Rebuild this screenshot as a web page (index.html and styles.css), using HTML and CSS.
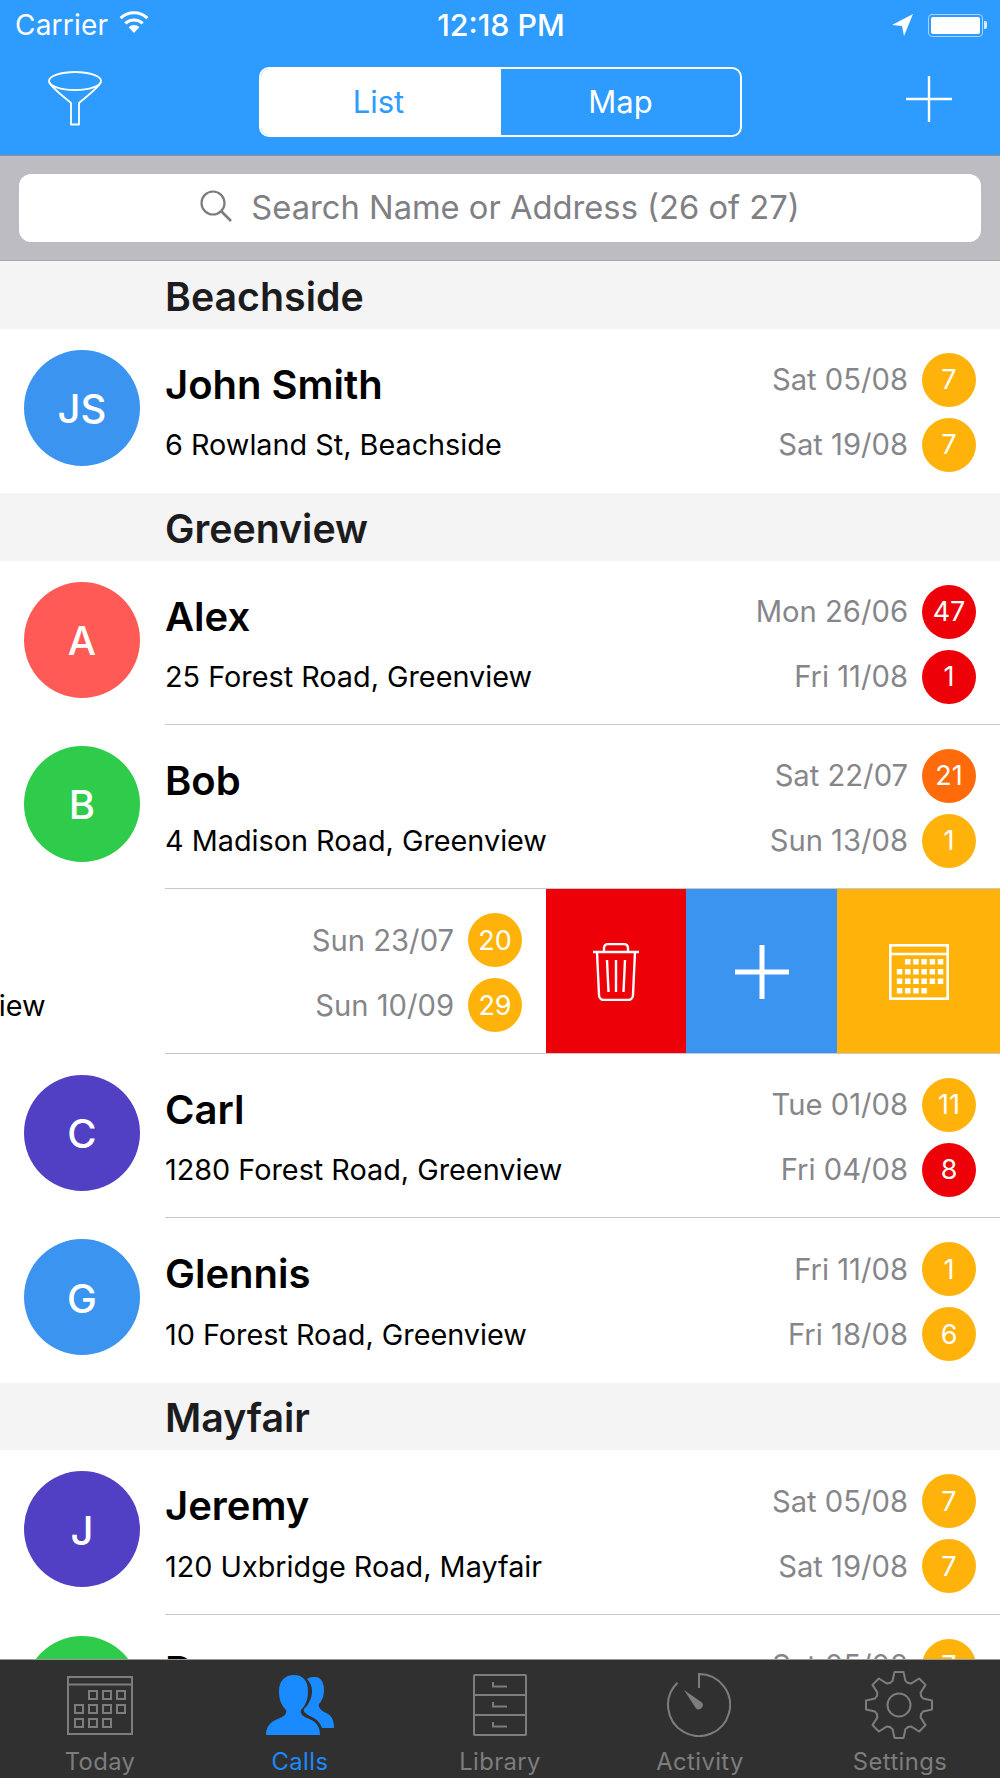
FILE: index.html
```html
<!DOCTYPE html>
<html lang="en">
<head>
<meta charset="utf-8">
<title>Calls</title>
<link rel="stylesheet" href="styles.css">
</head>
<body>
<div class="app">
  <header class="top">
    <div class="status">
      <div class="status-left"><span>Carrier</span>
        <svg class="wifi" viewBox="0 0 30 23"><path d="M15 23 9.600 17.200a8 8 0 0 1 10.800 0Z" fill="#fff"/><path d="M6.300 13.400a12.600 12.600 0 0 1 17.400 0M1.600 8.200A19.500 19.500 0 0 1 28.400 8.200" fill="none" stroke="#fff" stroke-width="3"/></svg>
      </div>
      <div class="status-time">12:18 PM</div>
      <div class="status-right">
        <svg class="loc" viewBox="0 0 21 22"><path d="M21 0 0 11l10 1 2 10Z" fill="#fff"/></svg>
        <div class="battery"><div class="battery-fill"></div></div><div class="battery-tip"></div>
      </div>
    </div>
    <nav class="nav">
      <svg class="funnel" viewBox="0 0 56 56"><g fill="none" stroke="#fff" stroke-width="1.800" stroke-linejoin="round"><ellipse cx="28" cy="10" rx="26" ry="9"/><path d="M2 11c3 6 15 15 22 21v21.500h8V32c7-6 19-15 22-21"/></g></svg>
      <div class="seg"><div class="seg-item seg-on">List</div><div class="seg-item">Map</div></div>
      <svg class="plus" viewBox="0 0 46 46"><path d="M23 0v46M0 23h46" stroke="#fff" stroke-width="2.400" fill="none"/></svg>
    </nav>
  </header>
  <div class="search-band">
    <div class="search">
      <svg class="search-icon" viewBox="0 0 33 33"><circle cx="13" cy="13" r="11.500" fill="none" stroke="#7c7c80" stroke-width="2.200"/><path d="M21.500 21.500 31 31" stroke="#7c7c80" stroke-width="2.600" fill="none"/></svg>
      <span>Search Name or Address (26 of 27)</span>
    </div>
  </div>
  <main class="list">
    <div class="section">Beachside</div>
    <div class="row">
      <div class="avatar av-blue">JS</div>
      <div class="body body-last">
        <div class="line"><div class="name">John Smith</div><div class="date">Sat 05/08</div><div class="badge b-amber">7</div></div>
        <div class="line"><div class="addr">6 Rowland St, Beachside</div><div class="date">Sat 19/08</div><div class="badge b-amber">7</div></div>
      </div>
    </div>
    <div class="section">Greenview</div>
    <div class="row">
      <div class="avatar av-coral">A</div>
      <div class="body">
        <div class="line"><div class="name">Alex</div><div class="date">Mon 26/06</div><div class="badge b-red">47</div></div>
        <div class="line"><div class="addr">25 Forest Road, Greenview</div><div class="date">Fri 11/08</div><div class="badge b-red">1</div></div>
      </div>
    </div>
    <div class="row">
      <div class="avatar av-green">B</div>
      <div class="body">
        <div class="line"><div class="name">Bob</div><div class="date">Sat 22/07</div><div class="badge b-orange">21</div></div>
        <div class="line"><div class="addr">4 Madison Road, Greenview</div><div class="date">Sun 13/08</div><div class="badge b-amber">1</div></div>
      </div>
    </div>
    <div class="row row-swiped">
      <div class="swiped-content">
        <div class="avatar av-blue">B</div>
        <div class="body body-last">
          <div class="line"><div class="name">Brian</div><div class="date">Sun 23/07</div><div class="badge b-amber">20</div></div>
          <div class="line"><div class="addr">9 Elder Road, Greenview</div><div class="date">Sun 10/09</div><div class="badge b-amber">29</div></div>
        </div>
      </div>
      <div class="action act-red">
        <svg class="act-trash" viewBox="0 0 48 58"><g fill="none" stroke="#fff" stroke-width="2.400"><path d="M1 9h46" stroke-width="2.600"/><path d="M12 9V5a4 4 0 0 1 4-4h16a4 4 0 0 1 4 4v4"/><path d="M5 9l2 43a5 5 0 0 0 5 5h24a5 5 0 0 0 5-5l2-43"/><path d="M15 17l1.500 32M24 17v32M33 17l-1.500 32"/></g></svg>
      </div>
      <div class="action act-blue">
        <svg class="act-plus" viewBox="0 0 54 54"><path d="M27 0v54M0 27h54" stroke="#fff" stroke-width="5" fill="none"/></svg>
      </div>
      <div class="action act-amber">
        <svg class="act-cal" viewBox="0 0 60 56"><g fill="none" stroke="#fff" stroke-width="2.600"><rect x="1.300" y="1.300" width="57.400" height="53.400"/><path d="M1 10h58"/></g><g fill="#fff"><rect x="16" y="15" width="5.500" height="5.500"/><rect x="24.200" y="15" width="5.500" height="5.500"/><rect x="32.400" y="15" width="5.500" height="5.500"/><rect x="40.600" y="15" width="5.500" height="5.500"/><rect x="48.800" y="15" width="5.500" height="5.500"/><rect x="7.800" y="25" width="5.500" height="5.500"/><rect x="16" y="25" width="5.500" height="5.500"/><rect x="24.200" y="25" width="5.500" height="5.500"/><rect x="32.400" y="25" width="5.500" height="5.500"/><rect x="40.600" y="25" width="5.500" height="5.500"/><rect x="48.800" y="25" width="5.500" height="5.500"/><rect x="7.800" y="34.500" width="5.500" height="5.500"/><rect x="16" y="34.500" width="5.500" height="5.500"/><rect x="24.200" y="34.500" width="5.500" height="5.500"/><rect x="32.400" y="34.500" width="5.500" height="5.500"/><rect x="40.600" y="34.500" width="5.500" height="5.500"/><rect x="48.800" y="34.500" width="5.500" height="5.500"/><rect x="7.800" y="44" width="5.500" height="5.500"/><rect x="16" y="44" width="5.500" height="5.500"/><rect x="24.200" y="44" width="5.500" height="5.500"/><rect x="32.400" y="44" width="5.500" height="5.500"/></g></svg>
      </div>
    </div>
    <div class="row">
      <div class="avatar av-indigo">C</div>
      <div class="body">
        <div class="line"><div class="name">Carl</div><div class="date">Tue 01/08</div><div class="badge b-amber">11</div></div>
        <div class="line"><div class="addr">1280 Forest Road, Greenview</div><div class="date">Fri 04/08</div><div class="badge b-red">8</div></div>
      </div>
    </div>
    <div class="row">
      <div class="avatar av-blue">G</div>
      <div class="body body-last">
        <div class="line"><div class="name">Glennis</div><div class="date">Fri 11/08</div><div class="badge b-amber">1</div></div>
        <div class="line"><div class="addr">10 Forest Road, Greenview</div><div class="date">Fri 18/08</div><div class="badge b-amber">6</div></div>
      </div>
    </div>
    <div class="section">Mayfair</div>
    <div class="row">
      <div class="avatar av-indigo">J</div>
      <div class="body">
        <div class="line"><div class="name">Jeremy</div><div class="date">Sat 05/08</div><div class="badge b-amber">7</div></div>
        <div class="line"><div class="addr">120 Uxbridge Road, Mayfair</div><div class="date">Sat 19/08</div><div class="badge b-amber">7</div></div>
      </div>
    </div>
    <div class="row">
      <div class="avatar av-green">D</div>
      <div class="body">
        <div class="line"><div class="name">Dave</div><div class="date">Sat 05/08</div><div class="badge b-amber">7</div></div>
      </div>
    </div>
  </main>
  <footer class="tabs">
    <div class="tab">
      <svg class="tab-icon" width="66" height="60" viewBox="0 0 66 60"><g fill="none" stroke="#7d7d7d" stroke-width="2"><rect x="1" y="2" width="64" height="57"/><path d="M1 9.500h64"/><rect x="22" y="16" width="8" height="8"/><rect x="36" y="16" width="8" height="8"/><rect x="50" y="16" width="8" height="8"/><rect x="8" y="30" width="8" height="8"/><rect x="22" y="30" width="8" height="8"/><rect x="36" y="30" width="8" height="8"/><rect x="50" y="30" width="8" height="8"/><rect x="8" y="44" width="8" height="8"/><rect x="22" y="44" width="8" height="8"/><rect x="36" y="44" width="8" height="8"/></g></svg>
      <span>Today</span>
    </div>
    <div class="tab tab-on">
      <svg class="tab-icon" width="68" height="60" viewBox="0 0 68 60"><path d="M0 60C0 50 6 46 14 43c5-2 7-5 6-8-5-5-7-11-7-19C13 6 19 0 28 0s14 6 14 16c0 8-2 14-7 19-1 3 1 6 6 8 8 3 13 7 13 17Z" fill="#1a8aff"/><path d="M41 4c3-2 6-2 8-2 6 0 9 6 9 13 0 6-2 11-5 14-1 4 2 6 7 9 5 2 8 6 8 15H56c-2-6-6-9-10-11-6-3-9-5-8-8 4-4 8-10 8-18 0-5-2-9-5-12Z" fill="#1a8aff"/></svg>
      <span>Calls</span>
    </div>
    <div class="tab">
      <svg class="tab-icon" width="54" height="62" viewBox="0 0 54 62"><g fill="none" stroke="#7d7d7d" stroke-width="2" stroke-linejoin="round"><rect x="1" y="1" width="52" height="60" rx="1"/><path d="M1 21h52M1 41h52M20 8v4.500h14M20 28v4.500h14M20 48v4.500h14"/></g></svg>
      <span>Library</span>
    </div>
    <div class="tab">
      <svg class="tab-icon" width="64" height="64" viewBox="0 0 64 64"><path d="M32 15V1a31 31 0 1 1-21.500 8.700" fill="none" stroke="#7d7d7d" stroke-width="2"/><path d="M17 17l18 12.500a4.300 4.300 0 0 1-6 6Z" fill="#7d7d7d"/></svg>
      <span>Activity</span>
    </div>
    <div class="tab">
      <svg class="tab-icon" width="70" height="70" viewBox="-35 -35 70 70"><defs><path id="tooth" d="M-10-21.500-6.500-24-4.500-33H4.500L6.500-24 10-21.500" fill="none" stroke="#7d7d7d" stroke-width="2" stroke-linejoin="round"/></defs><use href="#tooth"/><use href="#tooth" transform="rotate(45)"/><use href="#tooth" transform="rotate(90)"/><use href="#tooth" transform="rotate(135)"/><use href="#tooth" transform="rotate(180)"/><use href="#tooth" transform="rotate(225)"/><use href="#tooth" transform="rotate(270)"/><use href="#tooth" transform="rotate(315)"/><circle r="11.500" fill="none" stroke="#7d7d7d" stroke-width="2"/></svg>
      <span>Settings</span>
    </div>
  </footer>
</div>
</body>
</html>
```
FILE: styles.css
```css
* { box-sizing: border-box; }
html, body { margin: 0; padding: 0; background: #fff; }
body { font-family: Inter, "Liberation Sans", sans-serif; }
.app { width: 1000px; height: 1778px; display: flex; flex-direction: column; overflow: hidden; }

.top { height: 156px; flex: none; background: #2d9bff; border-bottom: 1px solid #8e8e93; color: #fff; }
.status { height: 52px; display: flex; align-items: center; padding: 0 13px 2px 15px; font-size: 28px; }
.status-left { flex: 1; display: flex; align-items: center; gap: 11px; letter-spacing: .2px; }
.wifi { width: 30px; height: 23px; margin-top: -7px; }
.status-time { font-weight: 500; font-size: 30.400px; }
.status-right { flex: 1; display: flex; align-items: center; justify-content: flex-end; }
.loc { width: 21px; height: 22px; margin-right: 15px; }
.battery { width: 55px; height: 23px; border: 1px solid #a8d4ff; border-radius: 4px; padding: 2px; }
.battery-fill { height: 100%; background: #fff; border-radius: 2px; }
.battery-tip { width: 3px; height: 8px; background: #d5eaff; border-radius: 0 2px 2px 0; margin-left: 1px; }

.nav { display: flex; align-items: center; justify-content: space-between; padding: 0 48px 0 47px; height: 103px; }
.funnel { width: 56px; height: 56px; margin-top: -9px; }
.seg { width: 483px; height: 70px; display: flex; border: 2px solid #fff; border-radius: 10px; overflow: hidden; margin-top: -3px; margin-left: -8px; }
.seg-item { flex: 1; display: flex; align-items: center; justify-content: center; font-size: 31px; color: #fff; padding-bottom: 1px; }
.seg-on { background: #fff; color: #2d9bff; padding-right: 5px; flex: none; width: 240px; }
.plus { width: 46px; height: 46px; margin-top: -9px; }

.search-band { height: 105px; flex: none; background: #bdbcc2; border-bottom: 1px solid #a9a9ad; padding: 18px 19px 0; }
.search { height: 68px; background: #fff; border-radius: 12px; display: flex; align-items: center; justify-content: center; gap: 18px; font-size: 32.700px; color: #808084; padding-bottom: 3px; }
.search-icon { width: 33px; height: 33px; }

.list { flex: 1; min-height: 0; overflow: hidden; }
.section { height: 67.600px; background: #f4f4f4; padding: 3px 0 0 165px; display: flex; align-items: center; font-size: 39.300px; font-weight: 600; color: #1c1c1e; }
.row { height: 164.400px; display: flex; align-items: stretch; padding-left: 24px; background: #fff; }
.avatar { flex: none; width: 116px; height: 116px; margin-top: 21px; padding-top: 2px; border-radius: 50%; color: #fff; font-size: 40px; font-weight: 500; display: flex; align-items: center; justify-content: center; }
.av-blue { background: #3b94f0; }
.av-coral { background: #ff5a55; }
.av-green { background: #2fcb4b; }
.av-indigo { background: #5140c4; }
.body { flex: 1; min-width: 0; margin-left: 25px; padding: 24px 24px 0 0; border-bottom: 1px solid #c8c7cc; display: flex; flex-direction: column; gap: 11px; }
.body-last { border-bottom: 0; }
.line { height: 54px; display: flex; align-items: center; }
.name { flex: 1; font-size: 40px; font-weight: 600; color: #000; padding-top: 9px; }
.addr { flex: 1; font-size: 28.800px; color: #000; white-space: nowrap; }
.date { font-size: 29.200px; color: #86868a; white-space: nowrap; margin-right: 14px; }
.badge { flex: none; width: 54px; height: 54px; border-radius: 50%; display: flex; align-items: center; justify-content: center; color: #fff; font-size: 27px; }
.b-amber { background: #ffb30a; }
.b-red { background: #ed0008; }
.b-orange { background: #ff6a0a; }

.row-swiped { padding-left: 0; overflow: hidden; position: relative; }
.row-swiped::after { content: ""; position: absolute; left: 165px; right: 0; bottom: 0; height: 1px; background: #c8c7cc; }
.swiped-content { flex: none; width: 1000px; margin-left: -454px; display: flex; padding-left: 24px; }
.action { flex: none; display: flex; align-items: center; justify-content: center; }
.act-red { width: 140px; background: #ed0008; }
.act-blue { width: 151px; background: #3b94f0; }
.act-amber { width: 163px; background: #ffb30a; }
.act-trash { width: 48px; height: 58px; }
.act-plus { width: 54px; height: 54px; }
.act-cal { width: 60px; height: 56px; }

.tabs { flex: none; height: 119px; background: #303030; border-top: 1px solid #9a9a9a; display: flex; }
.tab { flex: 1; position: relative; display: flex; flex-direction: column; align-items: center; color: #7d7d7d; font-size: 23.800px; letter-spacing: .4px; padding-top: 10px; }
.tab-icon { flex: none; }
.tab span { position: absolute; top: 88px; line-height: 28px; }
.tab-on { color: #1a8aff; }
.tab:nth-child(1) .tab-icon, .tab:nth-child(2) .tab-icon { margin-top: 5px; }
.tab:nth-child(3) .tab-icon { margin-top: 4px; }
.tab:nth-child(4) .tab-icon { margin-top: 3px; margin-left: -2px; }
.tab:nth-child(5) .tab-icon { margin-left: -2px; }
```
